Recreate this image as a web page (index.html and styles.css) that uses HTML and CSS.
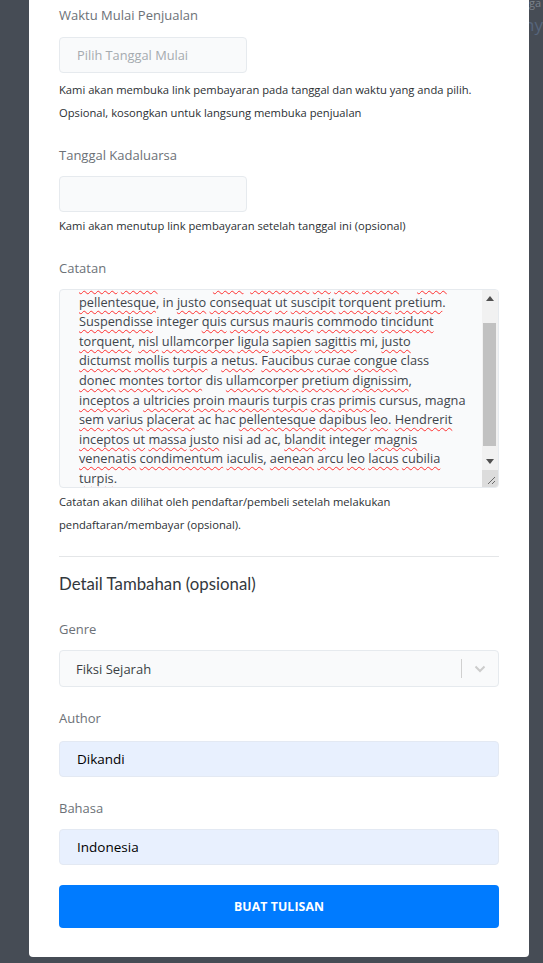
FILE: index.html
```html
<!DOCTYPE html>
<html lang="id">
<head>
<meta charset="utf-8">
<title>Buat Tulisan</title>
<link rel="stylesheet" href="styles.css">
</head>
<body>
<div class="backdrop">
  <div class="gutter-left"></div>
  <div class="modal">
    <label class="label">Waktu Mulai Penjualan</label>
    <input class="input input-small input-first" type="text" placeholder="Pilih Tanggal Mulai">
    <p class="help help-first">Kami akan membuka link pembayaran pada tanggal dan waktu yang anda pilih.<br>Opsional, kosongkan untuk langsung membuka penjualan</p>

    <label class="label label-gap">Tanggal Kadaluarsa</label>
    <input class="input input-small input-next" type="text">
    <p class="help help-tight">Kami akan menutup link pembayaran setelah tanggal ini (opsional)</p>

    <label class="label label-gap">Catatan</label>
    <div class="textarea">
      <div class="ta-text">
        <div class="ta-inner">
          <div><span class="sp">Lorem</span> <span class="sp">ipsum</span> dolor sit <span class="sp">amet</span>, <span class="sp">adipiscing</span> <span class="sp">elit</span> <span class="sp">velit</span> <span class="sp">augue</span> et <span class="sp">nunc</span></div>
          <div><span class="sp">pellentesque</span>, in <span class="sp">justo</span> <span class="sp">consequat</span> <span class="sp">ut</span> <span class="sp">suscipit</span> <span class="sp">torquent</span> <span class="sp">pretium</span>.</div>
          <div><span class="sp">Suspendisse</span> integer <span class="sp">quis</span> <span class="sp">cursus</span> <span class="sp">mauris</span> <span class="sp">commodo</span> <span class="sp">tincidunt</span></div>
          <div><span class="sp">torquent</span>, <span class="sp">nisl</span> <span class="sp">ullamcorper</span> <span class="sp">ligula</span> <span class="sp">sapien</span> <span class="sp">sagittis</span> mi, <span class="sp">justo</span></div>
          <div><span class="sp">dictumst</span> <span class="sp">mollis</span> <span class="sp">turpis</span> a <span class="sp">netus</span>. <span class="sp">Faucibus</span> <span class="sp">curae</span> <span class="sp">congue</span> class</div>
          <div><span class="sp">donec</span> <span class="sp">montes</span> <span class="sp">tortor</span> dis <span class="sp">ullamcorper</span> <span class="sp">pretium</span> <span class="sp">dignissim</span>,</div>
          <div><span class="sp">inceptos</span> a <span class="sp">ultricies</span> <span class="sp">proin</span> <span class="sp">mauris</span> <span class="sp">turpis</span> <span class="sp">cras</span> <span class="sp">primis</span> cursus, magna</div>
          <div><span class="sp">sem</span> <span class="sp">varius</span> <span class="sp">placerat</span> ac hac <span class="sp">pellentesque</span> <span class="sp">dapibus</span> <span class="sp">leo</span>. <span class="sp">Hendrerit</span></div>
          <div><span class="sp">inceptos</span> <span class="sp">ut</span> <span class="sp">massa</span> <span class="sp">justo</span> nisi ad ac, <span class="sp">blandit</span> integer <span class="sp">magnis</span></div>
          <div><span class="sp">venenatis</span> <span class="sp">condimentum</span> <span class="sp">iaculis</span>, <span class="sp">aenean</span> <span class="sp">arcu</span> <span class="sp">leo</span> <span class="sp">lacus</span> <span class="sp">cubilia</span></div>
          <div><span class="sp">turpis</span>.</div>
        </div>
      </div>
      <div class="scrollbar">
        <div class="sb-btn"><svg width="8" height="5" viewBox="0 0 8 5"><path d="M0 5 L4 0 L8 5 Z" fill="#505050"/></svg></div>
        <div class="sb-track"><div class="sb-thumb"></div></div>
        <div class="sb-btn"><svg width="8" height="5" viewBox="0 0 8 5"><path d="M0 0 L8 0 L4 5 Z" fill="#505050"/></svg></div>
        <div class="sb-resizer"><svg width="10" height="10" viewBox="0 0 10 10"><path d="M9 2 L2 9 M9 6 L6 9" stroke="#6a6a6a" stroke-width="1"/></svg></div>
      </div>
    </div>
    <p class="help help-tight">Catatan akan dilihat oleh pendaftar/pembeli setelah melakukan<br>pendaftaran/membayar (opsional).</p>

    <hr class="divider">

    <h3 class="section-title">Detail Tambahan (opsional)</h3>

    <label class="label label-gap-lg">Genre</label>
    <div class="select">
      <span class="select-value">Fiksi Sejarah</span>
      <span class="select-sep"></span>
      <span class="select-arrow"><svg width="12" height="8" viewBox="0 0 12 8"><path d="M1.5 1.5 L6 6 L10.5 1.5" fill="none" stroke="#cccccc" stroke-width="2"/></svg></span>
    </div>

    <label class="label label-gap">Author</label>
    <input class="input input-fill input-author" type="text" value="Dikandi">

    <label class="label label-gap">Bahasa</label>
    <input class="input input-fill input-next" type="text" value="Indonesia">

    <button class="btn" type="button">BUAT TULISAN</button>
  </div>
  <div class="gutter-right">
    <div class="peek-small">Tangga</div>
    <div class="peek-big">Tany</div>
  </div>
</div>
</body>
</html>
```
FILE: styles.css
```css
* { box-sizing: border-box; }

html, body {
  margin: 0;
  padding: 0;
  height: 963px;
  overflow: hidden;
  background: #464c55;
  font-family: "Open Sans", "Liberation Sans", sans-serif;
}

.backdrop {
  display: flex;
  align-items: flex-start;
  height: 963px;
}

.gutter-left {
  flex: 0 0 29px;
}

.modal {
  flex: 0 0 500px;
  display: flex;
  flex-direction: column;
  background: #ffffff;
  padding: 5px 30px 29px 30px;
  border-radius: 0 0 4px 4px;
}

.gutter-right {
  flex: 1 1 auto;
  min-width: 0;
  overflow: hidden;
  display: flex;
  flex-direction: column;
  align-items: flex-end;
}

.peek-small {
  font-size: 11px;
  line-height: 11px;
  margin-top: -3px;
  margin-right: 2px;
  color: #7b818a;
  white-space: nowrap;
}

.peek-big {
  font-family: "Open Sans", sans-serif;
  font-size: 17px;
  line-height: 24px;
  margin-top: 5px;
  margin-right: 0;
  color: #56657c;
  white-space: nowrap;
}

.label {
  display: block;
  font-size: 13px;
  line-height: 21px;
  color: #6c7177;
}

.label-gap { margin-top: 21px; }
.label-gap-lg { margin-top: 23px; }

.input {
  display: block;
  height: 36px;
  border: 1px solid #e6eaee;
  border-radius: 4px;
  background: #f9fafb;
  padding: 0 17px;
  font-family: "Open Sans", "Liberation Sans", sans-serif;
  font-size: 12.8px;
  color: #222;
  outline: none;
}

.input::placeholder { color: #a5aaaf; }

.input-small { width: 188px; }
.input-first { margin-top: 11px; }
.input-next { margin-top: 10px; }
.input-author { margin-top: 12px; }

.input-fill {
  width: 100%;
  background: #e8f0fe;
  border-color: #e3e9f3;
  color: #000;
  font-size: 13.5px;
}

.help {
  margin: 0;
  font-size: 11.2px;
  line-height: 23px;
  color: #2b2f33;
}

.help-first { margin-top: 5px; }
.help-tight { margin-top: 2px; }

.textarea {
  margin-top: 10px;
  height: 199px;
  border: 1px solid #e6eaee;
  border-radius: 4px;
  background: #f9fafb;
  display: flex;
  overflow: hidden;
}

.ta-text {
  flex: 1 1 auto;
  overflow: hidden;
  padding-left: 19px;
}

.ta-inner {
  margin-top: -17px;
  font-size: 12.75px;
  line-height: 19.6px;
  color: #40454c;
  white-space: nowrap;
}

.sp {
  text-decoration: underline wavy #ff3030;
  text-decoration-thickness: 1px;
  text-underline-offset: 3px;
  text-decoration-skip-ink: none;
}

.scrollbar {
  flex: 0 0 16px;
  display: flex;
  flex-direction: column;
  background: #f1f1f1;
}

.sb-btn {
  flex: 0 0 17px;
  display: flex;
  align-items: center;
  justify-content: center;
}

.sb-track {
  flex: 1 1 auto;
  padding: 16px 2px 0 1px;
}

.sb-thumb {
  height: 123px;
  background: #c1c1c1;
}

.sb-resizer {
  flex: 0 0 17px;
  background: #dcdcdc;
  display: flex;
  align-items: flex-end;
  justify-content: flex-end;
  padding: 0 2px 2px 0;
}

.divider {
  margin: 20px 0 0 0;
  border: 0;
  border-top: 1px solid #e4e6e8;
  height: 0;
}

.section-title {
  margin: 15px 0 0 0;
  font-family: "Lato", "Open Sans", sans-serif;
  font-weight: 400;
  font-size: 16.8px;
  line-height: 24px;
  color: #33383d;
}

.select {
  margin-top: 10px;
  height: 37px;
  border: 1px solid #e6eaee;
  border-radius: 4px;
  background: #f9fafb;
  display: flex;
  align-items: center;
  padding-left: 16px;
}

.select-value {
  flex: 1 1 auto;
  font-size: 13px;
  color: #3a3f44;
}

.select-sep {
  width: 1px;
  height: 19px;
  background: #d0d0d0;
}

.select-arrow {
  flex: 0 0 36px;
  display: flex;
  align-items: center;
  justify-content: center;
}

.btn {
  margin-top: 20px;
  height: 43px;
  width: 100%;
  border: 0;
  border-radius: 4px;
  background: #007bff;
  color: #ffffff;
  font-family: "Open Sans", "Liberation Sans", sans-serif;
  font-weight: 700;
  font-size: 12.3px;
  letter-spacing: 0.1px;
}
```
